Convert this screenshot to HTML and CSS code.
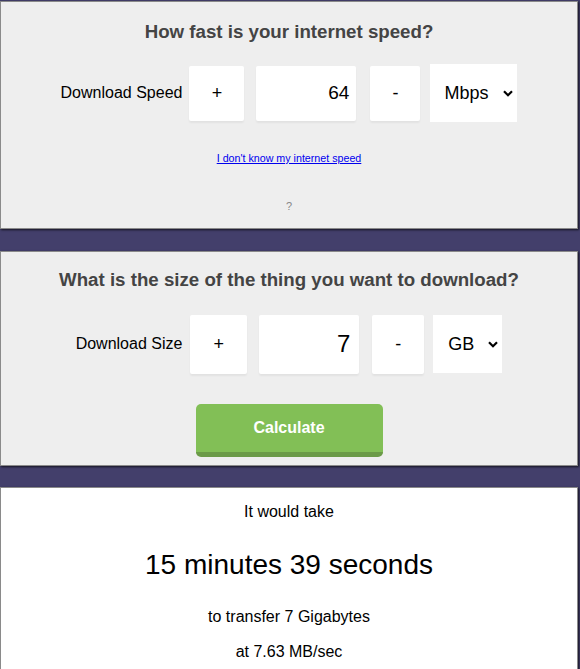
FILE: index.html
```html
<!DOCTYPE html>
<html>
<head>
<meta charset="utf-8">
<link rel="stylesheet" href="styles.css">
</head>
<body>
<div class="page">
  <section class="panel panel-speed">
    <h2 class="title">How fast is your internet speed?</h2>
    <div class="row row-speed">
      <span class="label">Download Speed</span>
      <div class="box btn plus">+</div>
      <div class="box num">64</div>
      <div class="box btn minus">-</div>
      <div class="select">
        <span class="select-text">Mbps</span>
        <svg class="chev" width="10" height="7" viewBox="0 0 10 7"><path d="M1 1.2 L5 5.2 L9 1.2" fill="none" stroke="#000" stroke-width="2.2"/></svg>
      </div>
    </div>
    <div class="link-wrap"><a class="link" href="#">I don't know my internet speed</a></div>
    <div class="q">?</div>
  </section>

  <section class="panel panel-size">
    <h2 class="title">What is the size of the thing you want to download?</h2>
    <div class="row row-size">
      <span class="label">Download Size</span>
      <div class="box btn plus">+</div>
      <div class="box num">7</div>
      <div class="box btn minus">-</div>
      <div class="select">
        <span class="select-text">GB</span>
        <svg class="chev" width="10" height="7" viewBox="0 0 10 7"><path d="M1 1.2 L5 5.2 L9 1.2" fill="none" stroke="#000" stroke-width="2.2"/></svg>
      </div>
    </div>
    <div class="calc-wrap"><button class="calc">Calculate</button></div>
  </section>

  <section class="panel panel-result">
    <p class="r-small r-first">It would take</p>
    <p class="r-big">15 minutes 39 seconds</p>
    <p class="r-small r-transfer">to transfer 7 Gigabytes</p>
    <p class="r-small r-rate">at 7.63 MB/sec</p>
  </section>
</div>
</body>
</html>
```
FILE: styles.css
```css
html, body {
  margin: 0;
  padding: 0;
}
body {
  background: #433f6b;
  font-family: "Liberation Sans", Arial, sans-serif;
  color: #000;
  overflow: hidden;
}
.page {
  padding-top: 1px;
  width: 578px;
}
.panel {
  background: #eeeeee;
  border: 1px solid #8a8a8a;
  box-shadow: 1px 1px 2px rgba(0, 0, 0, 0.7);
  text-align: center;
}
.title {
  margin: 0;
  font-size: 18.7px;
  line-height: 22px;
  font-weight: bold;
  color: #444;
}
.panel-speed {
  padding: 19px 0 15px;
}
.panel-size {
  margin-top: 22px;
  padding: 17px 0 8px;
}
.row {
  display: flex;
  justify-content: center;
  align-items: center;
}
.row-speed {
  margin-top: 21px;
  height: 58px;
}
.row-size {
  margin-top: 23px;
  height: 60px;
}
.label {
  font-size: 16px;
  color: #000;
  margin-right: 7px;
}
.row-size .label {
  margin-right: 8px;
}
.box {
  background: #fff;
  border-radius: 2px;
  box-shadow: 0 2px 2px rgba(0, 0, 0, 0.05);
  font-size: 18px;
  display: flex;
  align-items: center;
  box-sizing: border-box;
}
.btn {
  justify-content: center;
}
.num {
  justify-content: flex-end;
  padding-right: 7px;
  font-size: 19px;
}
.row-speed .box { height: 55px; }
.row-speed .plus { width: 55px; margin-right: 12px; }
.row-speed .num { width: 100px; margin-right: 14px; }
.row-speed .minus { width: 50px; margin-right: 10px; }
.row-speed .select { width: 87px; height: 58px; }
.row-size .box { height: 59px; }
.row-size .plus { width: 57px; margin-right: 12px; }
.row-size .num { width: 100px; margin-right: 13px; font-size: 24px; padding-right: 9px; }
.row-size .minus { width: 52px; margin-right: 9px; }
.row-size .select { width: 69px; height: 58px; }
.select {
  background: #fff;
  display: flex;
  align-items: center;
  box-sizing: border-box;
  padding-left: 14px;
  font-size: 18px;
}
.row-size .select { padding-left: 15px; }
.select-text {
  flex: 1;
  text-align: left;
}
.chev {
  margin-right: 4px;
}
.link-wrap {
  margin-top: 30px;
  font-size: 10.7px;
  line-height: 13px;
}
.link {
  color: #0000ee;
  text-decoration: underline;
}
.q {
  margin-top: 35px;
  font-size: 11px;
  line-height: 13px;
  color: #888;
}
.calc-wrap {
  margin-top: 30px;
  display: flex;
  justify-content: center;
}
.calc {
  width: 187px;
  height: 53px;
  background: #82bf56;
  border: none;
  border-bottom: 5px solid #6b9a48;
  border-radius: 5px;
  color: #fff;
  font-family: "Liberation Sans", Arial, sans-serif;
  font-weight: bold;
  font-size: 16px;
  padding: 0;
}
.panel-result {
  margin-top: 21px;
  background: #fff;
  padding: 15px 0 40px;
  color: #000;
}
.panel-result p {
  margin: 0;
}
.r-small {
  font-size: 16px;
  line-height: 18px;
}
.r-big {
  margin-top: 28px !important;
  font-size: 28px;
  line-height: 32px;
}
.r-transfer {
  margin-top: 27px !important;
}
.r-rate {
  margin-top: 17px !important;
}
```
